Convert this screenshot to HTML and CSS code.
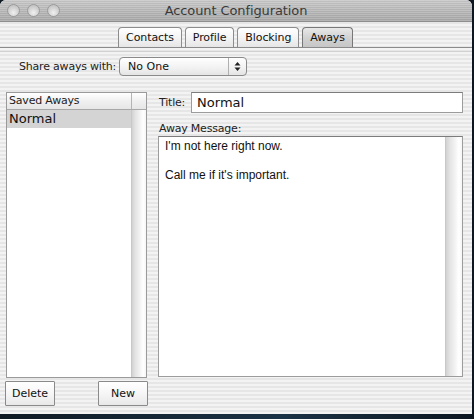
FILE: index.html
```html
<!DOCTYPE html>
<html>
<head>
<meta charset="utf-8">
<link rel="stylesheet" href="styles.css">
</head>
<body>
<div class="window">
  <div class="titlebar">
    <div class="lights">
      <span class="light"></span><span class="light"></span><span class="light"></span>
    </div>
    <div class="title">Account Configuration</div>
  </div>
  <div class="tabbar">
    <div class="tab">Contacts</div>
    <div class="tab">Profile</div>
    <div class="tab">Blocking</div>
    <div class="tab selected">Aways</div>
  </div>
  <div class="panel">
    <div class="share-row">
      <span class="label">Share aways with:</span>
      <div class="popup">
        <span class="popup-text">No One</span>
        <span class="popup-arrows">
          <svg width="7" height="11" viewBox="0 0 7 11"><path d="M3.5 1 L6.5 4.5 H0.5 Z M3.5 10 L6.5 6.5 H0.5 Z" fill="#222"/></svg>
        </span>
      </div>
    </div>
    <div class="main">
      <div class="left">
        <div class="list">
          <div class="list-body">
            <div class="list-header"><span class="hcell">Saved Aways</span><span class="hcorner"></span></div>
            <div class="rows">
              <div class="list-col">
                <div class="row selected">Normal</div>
              </div>
              <div class="vscroll"></div>
            </div>
          </div>
        </div>
        <div class="buttons">
          <button class="btn">Delete</button>
          <button class="btn">New</button>
        </div>
      </div>
      <div class="right">
        <div class="title-row">
          <span class="label">Title:</span>
          <div class="field">Normal</div>
        </div>
        <div class="label msg-label">Away Message:</div>
        <div class="textarea">
          <div class="text">
            <p>I'm not here right now.</p>
            <p>Call me if it's important.</p>
          </div>
          <div class="vscroll"></div>
        </div>
      </div>
    </div>
  </div>
</div>
</body>
</html>
```
FILE: styles.css
```css
html, body {
  margin: 0;
  padding: 0;
}
body {
  width: 474px;
  height: 419px;
  overflow: hidden;
  background: linear-gradient(90deg, #0f1a24, #1b3346 60%, #0c1620);
  font-family: "DejaVu Sans", "Liberation Sans", sans-serif;
}
.window {
  width: 472px;
  height: 414px;
  display: flex;
  flex-direction: column;
  border-radius: 6px 6px 0 0;
  overflow: hidden;
  background: repeating-linear-gradient(180deg, #f3f3f3 0px, #f3f3f3 2px, #e6e6e6 2px, #e6e6e6 4px);
}
.titlebar {
  height: 22px;
  flex: none;
  position: relative;
  display: flex;
  align-items: center;
  justify-content: center;
  background: repeating-linear-gradient(180deg, rgba(255,255,255,0.12) 0px, rgba(255,255,255,0.12) 1px, rgba(0,0,0,0.04) 1px, rgba(0,0,0,0.04) 2px),
              linear-gradient(180deg, #c9c9c9, #a9a9a9);
  border-bottom: 1px solid #8e8e8e;
  box-sizing: border-box;
}
.lights {
  position: absolute;
  left: 7px;
  top: 4px;
  display: flex;
  gap: 7px;
}
.light {
  width: 13px;
  height: 13px;
  border-radius: 50%;
  box-sizing: border-box;
  border: 1px solid #9a9a9a;
  background: radial-gradient(circle at 50% 70%, #f0f0f0 0%, #d6d6d6 45%, #b8b8b8 100%);
}
.title {
  font-size: 13px;
  color: #3a3a3a;
  letter-spacing: -0.1px;
}
.tabbar {
  height: 26px;
  flex: none;
  box-sizing: border-box;
  display: flex;
  align-items: flex-end;
  justify-content: center;
  gap: 3px;
  padding-left: 0;
  padding-right: 1px;
  border-bottom: 1px solid #8a8a8a;
}
.tab {
  height: 20px;
  box-sizing: border-box;
  padding: 0 7px;
  font-size: 11px;
  line-height: 20px;
  color: #111;
  letter-spacing: -0.1px;
  border: 1px solid #8c8c8c;
  border-bottom: none;
  border-radius: 4px 4px 0 0;
  background: linear-gradient(180deg, #ffffff 0%, #f4f4f4 50%, #e6e6e6 100%);
}
.tab.selected {
  background: linear-gradient(180deg, #e8e8e8 0%, #d2d2d2 50%, #c6c6c6 100%);
  border-color: #777;
}
.panel {
  flex: 1;
  display: flex;
  flex-direction: column;
  border-top: 1px solid #d0d0d0;
  margin-top: 3px;
}
.share-row {
  display: flex;
  align-items: center;
  height: 20px;
  margin-top: 4px;
  padding-left: 19px;
  gap: 3px;
}
.label {
  font-size: 11px;
  color: #222;
  letter-spacing: -0.2px;
}
.popup {
  width: 128px;
  height: 19px;
  box-sizing: border-box;
  border: 1px solid #8a8a8a;
  border-radius: 4px;
  background: linear-gradient(180deg, #ffffff, #f1f1f1 60%, #e4e4e4);
  display: flex;
  align-items: center;
  justify-content: space-between;
}
.popup-text {
  font-size: 11px;
  color: #111;
  padding-left: 8px;
}
.popup-arrows {
  width: 17px;
  height: 17px;
  display: flex;
  align-items: center;
  justify-content: center;
  border-left: 1px solid #b0b0b0;
}
.main {
  display: flex;
  margin-top: 16px;
  padding-left: 6px;
  gap: 11px;
}
.left {
  width: 141px;
  display: flex;
  flex-direction: column;
}
.list {
  height: 286px;
  box-sizing: border-box;
  border: 1px solid #9a9a9a;
  background: #fff;
}
.list-body {
  height: 100%;
  display: flex;
  flex-direction: column;
}
.list-header {
  height: 17px;
  flex: none;
  display: flex;
  box-sizing: border-box;
  border-bottom: 1px solid #a8a8a8;
  background: linear-gradient(180deg, #ffffff, #f0f0f0 50%, #e6e6e6);
}
.hcell {
  flex: 1;
  font-size: 11px;
  line-height: 16px;
  padding-left: 2px;
  color: #222;
  letter-spacing: -0.2px;
  border-right: 1px solid #b4b4b4;
}
.hcorner {
  width: 14px;
}
.rows {
  flex: 1;
  display: flex;
}
.list-col {
  flex: 1;
}
.row {
  height: 18px;
  font-size: 13px;
  line-height: 18px;
  padding-left: 2px;
  color: #111;
}
.row.selected {
  background: #d4d4d4;
}
.vscroll {
  width: 14px;
  background: linear-gradient(90deg, #d2d2d2 0%, #e4e4e4 25%, #f2f2f2 55%, #ffffff 80%, #f6f6f6 100%);
  border-left: 1px solid #c8c8c8;
}
.buttons {
  display: flex;
  justify-content: space-between;
  margin-top: 3px;
  margin-left: -1px;
  width: 143px;
}
.btn {
  width: 50px;
  height: 25px;
  box-sizing: border-box;
  border: 1px solid #8a8a8a;
  border-radius: 1px;
  background: linear-gradient(180deg, #ffffff, #f6f6f6 50%, #e8e8e8);
  font-family: "DejaVu Sans", "Liberation Sans", sans-serif;
  font-size: 11px;
  color: #111;
  padding: 0;
}
.right {
  flex: 1;
  display: flex;
  flex-direction: column;
  padding-right: 9px;
}
.title-row {
  display: flex;
  align-items: center;
  gap: 6px;
  margin-left: 1px;
}
.field {
  flex: 1;
  height: 21px;
  box-sizing: border-box;
  border: 1px solid #9c9c9c;
  border-top-color: #7c7c7c;
  background: #fff;
  font-size: 13px;
  line-height: 19px;
  padding-left: 5px;
  color: #111;
}
.msg-label {
  margin-top: 9px;
  margin-left: 1px;
  line-height: 14px;
}
.textarea {
  height: 241px;
  box-sizing: border-box;
  border: 1px solid #9c9c9c;
  border-top-color: #7c7c7c;
  background: #fff;
  display: flex;
}
.text {
  flex: 1;
  padding: 2px 6px;
  font-family: "Liberation Sans", Arial, sans-serif;
  font-size: 12px;
  color: #111;
}
.text p {
  margin: 0 0 15px 0;
  line-height: 14px;
}
.textarea .vscroll {
  width: 16px;
}
```
